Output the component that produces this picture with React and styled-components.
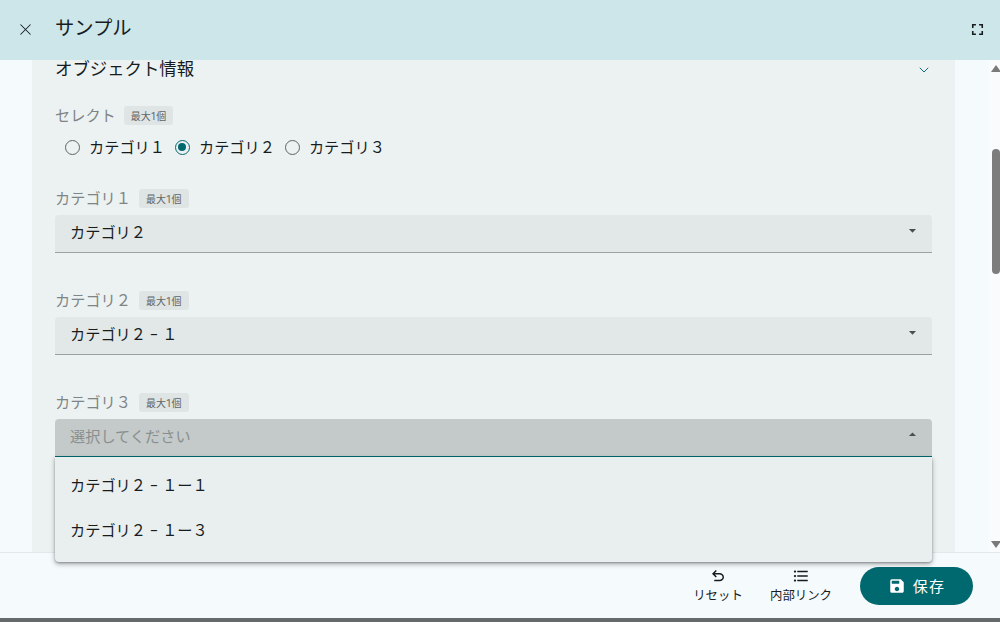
import React from "react";
import styled, { createGlobalStyle } from "styled-components";
import { MdArrowDropDown, MdArrowDropUp, MdFullscreen, MdFormatListBulleted, MdSave } from "react-icons/md";
import { X, ChevronDown } from "lucide-react";

const Global = createGlobalStyle`
  html, body { margin: 0; padding: 0; }
  body { font-family: Roboto, "Noto Sans CJK JP", sans-serif; background: #f5fafc; }
  * { box-sizing: border-box; }
`;

const Page = styled.div`
  width: 1000px;
  height: 622px;
  display: flex;
  flex-direction: column;
  overflow: hidden;
  background: #f5fafc;
  border-bottom: 4px solid #666a6b;
`;
const Header = styled.header`
  height: 60px;
  flex: none;
  display: flex;
  align-items: center;
  padding: 0 13px 2px 15px;
  background: #cde6ea;
  color: #171d1e;
`;
const HeaderIcon = styled.span`
  display: flex;
  width: 20px;
  justify-content: center;
  font-size: ${p => p.$size}px;
`;
const Title = styled.h1`
  flex: 1;
  margin: 0 0 0 20px;
  font-size: 19.3px;
  font-weight: 400;
  line-height: 28px;
`;
const Body = styled.main`
  flex: 1;
  min-height: 0;
  display: flex;
  padding-left: 32px;
`;
const Panel = styled.section`
  width: 923px;
  padding: 0 23px;
  background: #ecf2f2;
`;
const PanelHead = styled.div`
  height: 20px;
  margin-bottom: 25px;
  padding-bottom: 2px;
  display: flex;
  align-items: center;
  justify-content: space-between;
  font-size: 17.4px;
  color: #171d1e;
  line-height: 20px;
  svg { color: #00696f; margin-top: 2px; }
`;
const LabelRow = styled.div`
  display: flex;
  align-items: center;
  gap: 8px;
  height: 20px;
  font-size: 15.2px;
  color: #7f8585;
`;
const LabelText = styled.span`
  padding-bottom: 2px;
`;
const Badge = styled.span`
  display: inline-flex;
  align-items: center;
  height: 19px;
  padding: 0 7px;
  border-radius: 3px;
  background: #dfe4e4;
  color: #5f6566;
  font-size: 10px;
`;
const RadioGroup = styled.div`
  display: flex;
  margin: 11px 0 0 10px;
  height: 22px;
  align-items: center;
  gap: 10px;
`;
const RadioItem = styled.label`
  display: flex;
  align-items: center;
  gap: 9px;
  font-size: 15.2px;
  color: #171d1e;
`;
const RadioText = styled.span`
  padding-bottom: 2px;
`;
const RadioMark = styled.span`
  width: 15px;
  height: 15px;
  border-radius: 50%;
  border: 1.5px solid ${p => (p.$on ? "#00696f" : "#5f6566")};
  display: flex;
  align-items: center;
  justify-content: center;
  &::after {
    content: "";
    display: ${p => (p.$on ? "block" : "none")};
    width: 8px;
    height: 8px;
    border-radius: 50%;
    background: #00696f;
  }
`;
const Field = styled.div`
  position: relative;
  margin-top: ${p => p.$top}px;
`;
const SelectBox = styled.div`
  margin-top: 7px;
  height: 38px;
  padding: 0 11px 6px 15px;
  display: flex;
  align-items: center;
  justify-content: space-between;
  font-size: 15.2px;
  border-radius: 4px 4px 0 0;
  color: ${p => (p.$open ? "#898f8f" : "#171d1e")};
  background: ${p => (p.$open ? "#c4c9c9" : "#e2e7e7")};
  border-bottom: ${p => (p.$open ? "1.5px solid #00696f" : "1.5px solid #9ba1a1")};
  svg { color: #494f50; font-size: 17px; }
`;
const Menu = styled.ul`
  position: absolute;
  z-index: 5;
  left: 0;
  right: 0;
  top: 100%;
  margin: 0;
  padding: 4px 0;
  height: 105px;
  list-style: none;
  background: #e9eeee;
  border-radius: 0 0 4px 4px;
  box-shadow: 0 2px 5px rgba(0,0,0,.35), 0 1px 2px rgba(0,0,0,.2);
`;
const MenuItem = styled.li`
  height: 45px;
  padding-left: 15px;
  display: flex;
  align-items: center;
  font-size: 15.2px;
  color: #171d1e;
`;
const Gutter = styled.div`
  flex: 1;
`;
const Scrollbar = styled.div`
  width: 11px;
  padding: 5px 0 4px 2px;
  display: flex;
  flex-direction: column;
  align-items: center;
  background: #f9fbfc;
`;
const Arrow = styled.span`
  width: 0;
  height: 0;
  border-left: 5px solid transparent;
  border-right: 5px solid transparent;
  ${p => (p.$up ? "border-bottom: 7px solid #7a7a7a;" : "border-top: 7px solid #7a7a7a;")}
`;
const Thumb = styled.div`
  width: 8px;
  height: 125px;
  margin-top: 77px;
  margin-bottom: auto;
  border-radius: 4px;
  background: #7d7d7d;
`;
const Footer = styled.footer`
  height: 66px;
  flex: none;
  display: flex;
  align-items: center;
  justify-content: flex-end;
  padding-right: 27px;
  border-top: 1px solid #e3e8e8;
  background: #f5fafc;
`;
const ToolButton = styled.button`
  width: ${p => p.$w}px;
  margin-right: ${p => p.$mr}px;
  padding: 0;
  border: 0;
  background: none;
  display: flex;
  flex-direction: column;
  align-items: center;
  font: 12.4px Roboto, "Noto Sans CJK JP", sans-serif;
  color: #171d1e;
  white-space: nowrap;
  svg { height: 18px; width: auto; margin-bottom: 1px; fill: currentColor; }
`;
const SaveButton = styled.button`
  width: 113px;
  height: 38px;
  border: 0;
  border-radius: 19px;
  background: #00696f;
  color: #fff;
  display: flex;
  align-items: center;
  justify-content: center;
  gap: 7px;
  font: 15px Roboto, "Noto Sans CJK JP", sans-serif;
  letter-spacing: 1.2px;
  svg { font-size: 18px; }
`;

const Label = ({ children }) => (
  <LabelRow><LabelText>{children}</LabelText><Badge>最大1個</Badge></LabelRow>
);
const Radio = ({ on, children }) => (
  <RadioItem><RadioMark $on={on} /><RadioText>{children}</RadioText></RadioItem>
);
const UndoIcon = () => (
  <svg viewBox="0 -960 960 960" width="18" height="18">
    <path d="M280-200v-80h284q63 0 109.5-40T720-420q0-60-46.5-100T564-560H312l104 104-56 56-200-200 200-200 56 56-104 104h252q97 0 166.5 63T800-420q0 94-69.5 157T564-200H280Z" />
  </svg>
);

export default function App() {
  return (
    <Page>
      <Global />
      <Header>
        <HeaderIcon $size={19}><X size={19} strokeWidth={1.3} /></HeaderIcon>
        <Title>サンプル</Title>
        <HeaderIcon $size={19}><MdFullscreen /></HeaderIcon>
      </Header>
      <Body>
        <Panel>
          <PanelHead>オブジェクト情報<ChevronDown size={16} strokeWidth={1.4} /></PanelHead>
          <Label>セレクト</Label>
          <RadioGroup>
            <Radio>カテゴリ１</Radio>
            <Radio on>カテゴリ２</Radio>
            <Radio>カテゴリ３</Radio>
          </RadioGroup>
          <Field $top={30}>
            <Label>カテゴリ１</Label>
            <SelectBox>カテゴリ２<MdArrowDropDown /></SelectBox>
          </Field>
          <Field $top={37}>
            <Label>カテゴリ２</Label>
            <SelectBox>カテゴリ２ − １<MdArrowDropDown /></SelectBox>
          </Field>
          <Field $top={37}>
            <Label>カテゴリ３</Label>
            <SelectBox $open>選択してください<MdArrowDropUp /></SelectBox>
            <Menu>
              <MenuItem>カテゴリ２ − １ー１</MenuItem>
              <MenuItem>カテゴリ２ − １ー３</MenuItem>
            </Menu>
          </Field>
        </Panel>
        <Gutter />
        <Scrollbar>
          <Arrow $up />
          <Thumb />
          <Arrow />
        </Scrollbar>
      </Body>
      <Footer>
        <ToolButton $w={60} $mr={22}><UndoIcon />リセット</ToolButton>
        <ToolButton $w={62} $mr={28}><MdFormatListBulleted />内部リンク</ToolButton>
        <SaveButton><MdSave />保存</SaveButton>
      </Footer>
    </Page>
  );
}
